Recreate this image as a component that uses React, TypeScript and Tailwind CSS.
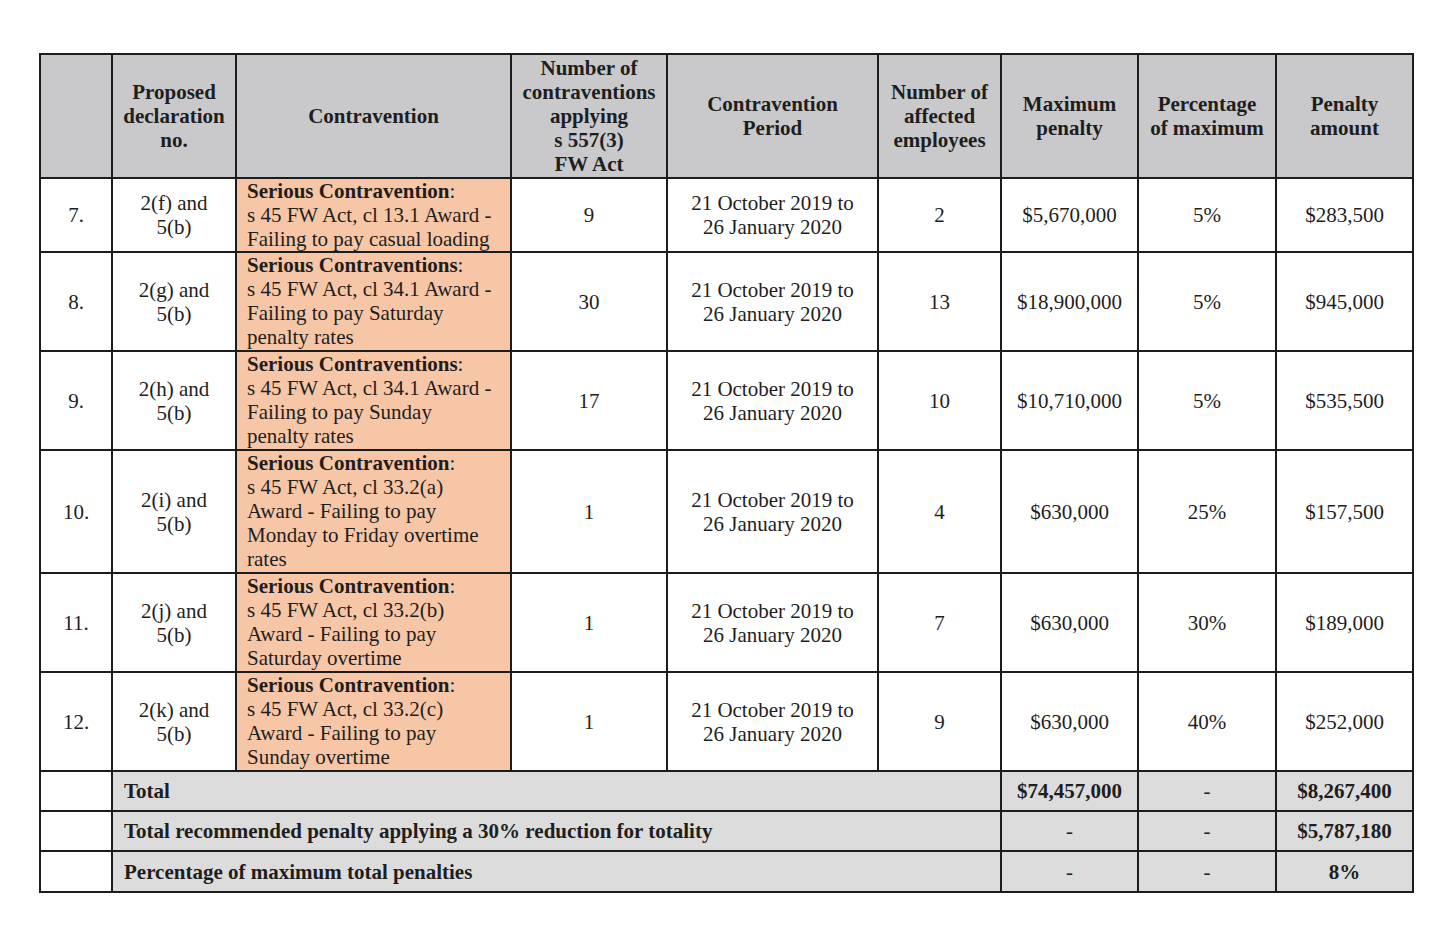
import React from 'react';

type Row = {
  n: string;
  decl: string[];
  title: string;
  lines: string[];
  count: string;
  emp: string;
  max: string;
  pct: string;
  amt: string;
  h: string;
};

const rows: Row[] = [
  { n: '7.', decl: ['2(f) and', '5(b)'], title: 'Serious Contravention', lines: ['s 45 FW Act, cl 13.1 Award -', 'Failing to pay casual loading'], count: '9', emp: '2', max: '$5,670,000', pct: '5%', amt: '$283,500', h: 'h-[74px]' },
  { n: '8.', decl: ['2(g) and', '5(b)'], title: 'Serious Contraventions', lines: ['s 45 FW Act, cl 34.1 Award -', 'Failing to pay Saturday', 'penalty rates'], count: '30', emp: '13', max: '$18,900,000', pct: '5%', amt: '$945,000', h: 'h-[99px]' },
  { n: '9.', decl: ['2(h) and', '5(b)'], title: 'Serious Contraventions', lines: ['s 45 FW Act, cl 34.1 Award -', 'Failing to pay Sunday', 'penalty rates'], count: '17', emp: '10', max: '$10,710,000', pct: '5%', amt: '$535,500', h: 'h-[99px]' },
  { n: '10.', decl: ['2(i) and', '5(b)'], title: 'Serious Contravention', lines: ['s 45 FW Act, cl 33.2(a)', 'Award - Failing to pay', 'Monday to Friday overtime', 'rates'], count: '1', emp: '4', max: '$630,000', pct: '25%', amt: '$157,500', h: 'h-[123px]' },
  { n: '11.', decl: ['2(j) and', '5(b)'], title: 'Serious Contravention', lines: ['s 45 FW Act, cl 33.2(b)', 'Award - Failing to pay', 'Saturday overtime'], count: '1', emp: '7', max: '$630,000', pct: '30%', amt: '$189,000', h: 'h-[99px]' },
  { n: '12.', decl: ['2(k) and', '5(b)'], title: 'Serious Contravention', lines: ['s 45 FW Act, cl 33.2(c)', 'Award - Failing to pay', 'Sunday overtime'], count: '1', emp: '9', max: '$630,000', pct: '40%', amt: '$252,000', h: 'h-[99px]' },
];

const headers: string[][] = [
  [],
  ['Proposed', 'declaration', 'no.'],
  ['Contravention'],
  ['Number of', 'contraventions', 'applying', 's 557(3)', 'FW Act'],
  ['Contravention', 'Period'],
  ['Number of', 'affected', 'employees'],
  ['Maximum', 'penalty'],
  ['Percentage', 'of maximum'],
  ['Penalty', 'amount'],
];

const widths = ['w-[72px]', 'w-[124px]', 'w-[275px]', 'w-[156px]', 'w-[211px]', 'w-[123px]', 'w-[137px]', 'w-[138px]', 'w-[137px]'];

const cell = 'border-2 border-[#1c1c1c] text-center align-middle p-0';

function Lines({ lines }: { lines: string[] }) {
  return (
    <>
      {lines.map((l, i) => (
        <div key={i} className="whitespace-nowrap">{l}</div>
      ))}
    </>
  );
}

const footer = [
  { label: 'Total', max: '$74,457,000', pct: '-', amt: '$8,267,400', h: 'h-[40px]' },
  { label: 'Total recommended penalty applying a 30% reduction for totality', max: '-', pct: '-', amt: '$5,787,180', h: 'h-[40px]' },
  { label: 'Percentage of maximum total penalties', max: '-', pct: '-', amt: '8%', h: 'h-[41px]' },
];

export default function App() {
  return (
    <div className="min-h-[941px] bg-white pl-[39px] pt-[53px] text-[#1e1e1e] font-['Liberation_Serif',serif] text-[21px] leading-[24px]">
      <table className="border-collapse table-fixed w-[1373px]">
        <colgroup>
          {widths.map((w, i) => (
            <col key={i} className={w} />
          ))}
        </colgroup>
        <thead>
          <tr className="h-[124px] bg-[#c9c9cc]">
            {headers.map((h, i) => (
              <th key={i} className={`${cell} font-bold`}>
                <Lines lines={h} />
              </th>
            ))}
          </tr>
        </thead>
        <tbody>
          {rows.map((r) => (
            <tr key={r.n} className={r.h}>
              <td className={cell}>{r.n}</td>
              <td className={cell}><Lines lines={r.decl} /></td>
              <td className={`${cell} bg-[#f7c6a6] text-left align-top pl-[10px]`}>
                <div className="whitespace-nowrap"><span className="font-bold">{r.title}</span>:</div>
                <Lines lines={r.lines} />
              </td>
              <td className={cell}>{r.count}</td>
              <td className={cell}><Lines lines={['21 October 2019 to', '26 January 2020']} /></td>
              <td className={cell}>{r.emp}</td>
              <td className={cell}>{r.max}</td>
              <td className={cell}>{r.pct}</td>
              <td className={cell}>{r.amt}</td>
            </tr>
          ))}
          {footer.map((f, i) => (
            <tr key={i} className={f.h}>
              <td className={cell}></td>
              <td colSpan={5} className={`${cell} bg-[#dcdcdc] text-left pl-[11px] font-bold whitespace-nowrap`}>{f.label}</td>
              <td className={`${cell} bg-[#dcdcdc] ${f.max === '-' ? '' : 'font-bold'}`}>{f.max}</td>
              <td className={`${cell} bg-[#dcdcdc]`}>{f.pct}</td>
              <td className={`${cell} bg-[#dcdcdc] font-bold`}>{f.amt}</td>
            </tr>
          ))}
        </tbody>
      </table>
    </div>
  );
}
